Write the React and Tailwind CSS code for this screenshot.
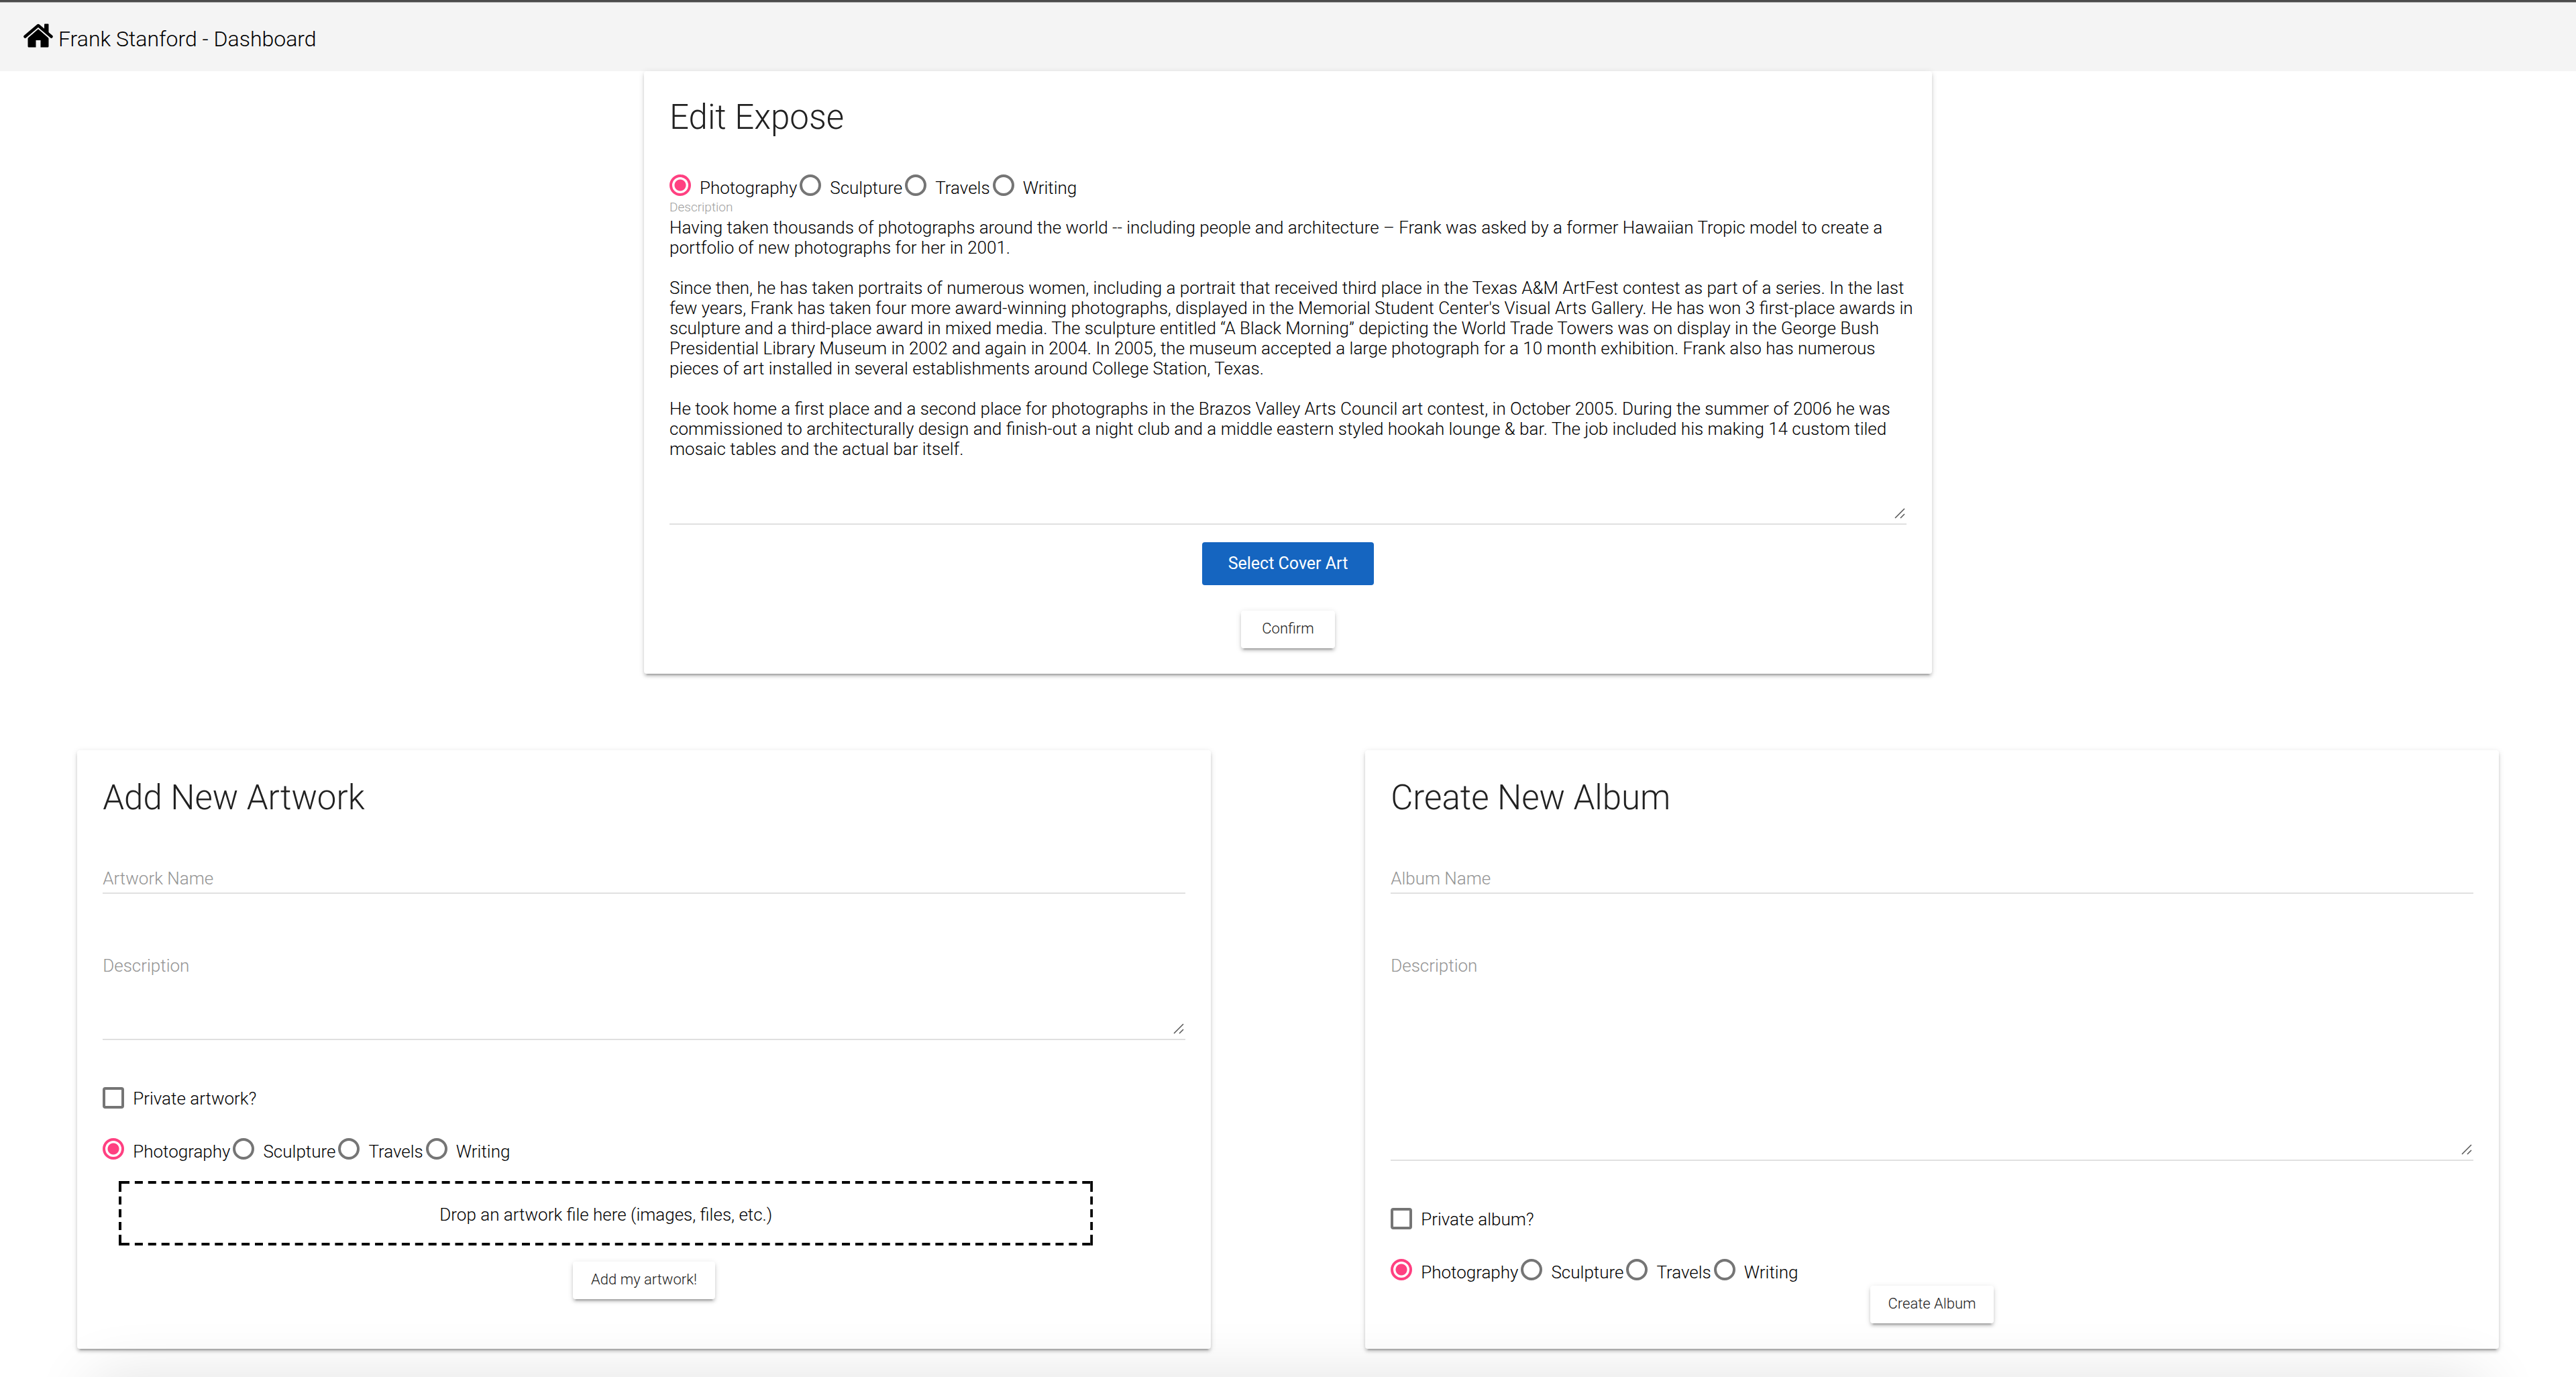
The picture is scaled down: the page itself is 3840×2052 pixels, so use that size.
import React, { useState } from 'react';

const INTRO = `Having taken thousands of photographs around the world -- including people and architecture – Frank was asked by a former Hawaiian Tropic model to create a portfolio of new photographs for her in 2001.

Since then, he has taken portraits of numerous women, including a portrait that received third place in the Texas A&M ArtFest contest as part of a series. In the last few years, Frank has taken four more award-winning photographs, displayed in the Memorial Student Center's Visual Arts Gallery. He has won 3 first-place awards in sculpture and a third-place award in mixed media. The sculpture entitled “A Black Morning” depicting the World Trade Towers was on display in the George Bush Presidential Library Museum in 2002 and again in 2004. In 2005, the museum accepted a large photograph for a 10 month exhibition. Frank also has numerous pieces of art installed in several establishments around College Station, Texas.

He took home a first place and a second place for photographs in the Brazos Valley Arts Council art contest, in October 2005. During the summer of 2006 he was commissioned to architecturally design and finish-out a night club and a middle eastern styled hookah lounge & bar. The job included his making 14 custom tiled mosaic tables and the actual bar itself.`;

const CATEGORIES = ['Photography', 'Sculpture', 'Travels', 'Writing'];

function Card({ title, className = '', children }) {
  return (
    <section
      className={`flex flex-col rounded bg-white px-[38px] shadow-[0_6px_2px_-4px_rgba(0,0,0,0.2),0_4px_4px_0_rgba(0,0,0,0.14),0_2px_10px_0_rgba(0,0,0,0.12)] ${className}`}
    >
      <h2 className="text-[51px] leading-[64px] text-[#212121]">{title}</h2>
      {children}
    </section>
  );
}

function CategoryPicker({ name }) {
  const [value, setValue] = useState('Photography');
  return (
    <fieldset className="flex gap-1">
      {CATEGORIES.map((category) => (
        <label key={category} className="flex h-8 gap-[13px]">
          <input
            type="radio"
            name={name}
            value={category}
            checked={value === category}
            onChange={() => setValue(category)}
            className="size-8 appearance-none rounded-full border-4 border-[#757575] checked:border-[#ff4081] checked:bg-[radial-gradient(circle,#ff4081_8px,transparent_9px)]"
          />
          <span className="pt-[5px] leading-[30px]">{category}</span>
        </label>
      ))}
    </fieldset>
  );
}

function Checkbox({ id, children }) {
  return (
    <div className="flex h-8 items-center gap-[13px]">
      <input
        id={id}
        type="checkbox"
        className="size-8 appearance-none rounded border-4 border-[#757575] checked:bg-[#ff4081]"
      />
      <label htmlFor={id} className="pt-0.5 leading-[30px]">
        {children}
      </label>
    </div>
  );
}

function Grip() {
  return (
    <svg
      className="pointer-events-none absolute right-0.5 bottom-[7px] size-4"
      viewBox="0 0 16 16"
      fill="none"
      stroke="#555"
      strokeWidth="1.5"
      aria-hidden="true"
    >
      <path d="M1 15 15 1M9 15l6-6" />
    </svg>
  );
}

function TextArea({ label, className, defaultValue }) {
  return (
    <div className="relative flex flex-col border-b-2 border-[#e0e0e0]">
      <textarea
        aria-label={label}
        placeholder={label}
        defaultValue={defaultValue}
        className={`-mr-5 resize-none overflow-hidden leading-[30px] outline-none placeholder:text-[#949494] ${className}`}
      />
      <Grip />
    </div>
  );
}

function TextInput({ label }) {
  return (
    <input
      type="text"
      aria-label={label}
      placeholder={label}
      className="h-10 w-full border-b-2 border-[#e0e0e0] pb-1 leading-[30px] outline-none placeholder:text-[#949494]"
    />
  );
}

function RaisedButton({ className = '', children }) {
  return (
    <button
      type="button"
      className={`h-14 self-center rounded bg-white pb-1 text-[22px] text-[#212121] shadow-[0_6px_2px_-4px_rgba(0,0,0,0.2),0_4px_4px_0_rgba(0,0,0,0.14),0_2px_10px_0_rgba(0,0,0,0.12)] ${className}`}
    >
      {children}
    </button>
  );
}

/* Drop target whose dashes are longer than those of a dashed border. */
function DropZone({ className = '', children }) {
  return (
    <div className={`relative flex h-24 items-center justify-center pt-1 ${className}`}>
      <svg
        className="pointer-events-none absolute inset-0 size-full overflow-hidden"
        stroke="#000"
        strokeWidth="8"
        aria-hidden="true"
      >
        <line x1="0" y1="0" x2="50%" y2="0" strokeDasharray="12 7.9" strokeDashoffset="15.9" />
        <line x1="100%" y1="0" x2="50%" y2="0" strokeDasharray="12 7.9" strokeDashoffset="15.9" />
        <line x1="0" y1="100%" x2="50%" y2="100%" strokeDasharray="12 7.9" strokeDashoffset="15.9" />
        <line x1="100%" y1="100%" x2="50%" y2="100%" strokeDasharray="12 7.9" strokeDashoffset="15.9" />
        <line x1="0" y1="0" x2="0" y2="100%" strokeDasharray="16 7 12 7 12 7 12 7 16 7" />
        <line x1="100%" y1="0" x2="100%" y2="100%" strokeDasharray="16 7 12 7 12 7 12 7 16 7" />
      </svg>
      {children}
    </div>
  );
}

export default function App() {
  return (
    <div className="min-h-screen overflow-hidden bg-white font-[Roboto,sans-serif] text-[26px] font-light text-black">
      <header className="flex h-[106px] items-center border-t-[3px] border-[#4c4c4c] bg-[#f4f4f4] px-[35px] pt-1.5 shadow-[inset_0_1px_0_#b0b0b0]">
        <a href="#home" className="flex items-end gap-2" aria-label="Frank Stanford - Dashboard">
          <svg className="mb-[13px] h-[36px] w-[44px]" viewBox="0 0 44 36" fill="#000" aria-hidden="true">
            <path d="M31 1.5Q31 .5 32 .5h4.500q1 0 1 1V15l-6.500-6z" />
            <path
              d="M2.500 19.500 22 3l19.500 16.500"
              fill="none"
              stroke="#000"
              strokeWidth="4.500"
              strokeLinecap="round"
              strokeLinejoin="round"
            />
            <path d="M22 8 37.500 21.500V34q0 1.500-1.500 1.500H25.500V25h-7v10.500H8q-1.500 0-1.500-1.500V21.500z" />
            <path d="M4.500 22.500 22 7.200 39.500 22.500" fill="none" stroke="#f4f4f4" strokeWidth="1.400" />
          </svg>
          <span className="text-[32px] leading-[52px]">Frank Stanford - Dashboard</span>
        </a>
      </header>

      <main>
        <div className="px-[25%]">
          <Card title="Edit Expose" className="pt-[37px] pb-[38px]">
            <div className="mt-[53px]">
              <CategoryPicker name="expose-category" />
            </div>
            <p className="mt-[5px] text-[19px] leading-6 text-[#9e9e9e]">Description</p>
            <TextArea label="Description" defaultValue={INTRO} className="mt-[3px] h-[456px]" />
            <button
              type="button"
              className="mt-[26px] h-16 w-64 self-center rounded bg-[#1565c0] text-[25px] font-normal text-white"
            >
              Select Cover Art
            </button>
            <RaisedButton className="mt-[38px] px-[31px]">Confirm</RaisedButton>
          </Card>
        </div>

        <div className="mt-[114px] grid grid-cols-2">
          <div className="px-[6%]">
            <Card title="Add New Artwork" className="h-full pt-[39px] pb-[74px]">
              <div className="mt-[71px] flex flex-col">
                <TextInput label="Artwork Name" />
              </div>
              <div className="mt-[92px]">
                <TextArea label="Description" className="h-[124px]" />
              </div>
              <div className="mt-[70px]">
                <Checkbox id="private-artwork">Private artwork?</Checkbox>
              </div>
              <div className="mt-11">
                <CategoryPicker name="artwork-category" />
              </div>
              <DropZone className="mt-8 ml-6 w-[90%]">Drop an artwork file here (images, files, etc.)</DropZone>
              <RaisedButton className="mt-6 px-[27px]">Add my artwork!</RaisedButton>
            </Card>
          </div>
          <div className="px-[6%]">
            <Card title="Create New Album" className="h-full pt-[39px] pb-[38px]">
              <div className="mt-[71px] flex flex-col">
                <TextInput label="Album Name" />
              </div>
              <div className="mt-[92px]">
                <TextArea label="Description" className="h-[304px]" />
              </div>
              <div className="mt-[70px]">
                <Checkbox id="private-album">Private album?</Checkbox>
              </div>
              <div className="mt-11">
                <CategoryPicker name="album-category" />
              </div>
              <RaisedButton className="mt-2 px-[27px]">Create Album</RaisedButton>
            </Card>
          </div>
        </div>
      </main>

      <div className="pointer-events-none fixed inset-x-[4%] top-full h-40 shadow-[0_18px_92px_16px_rgba(0,0,0,0.12)]" />
    </div>
  );
}
